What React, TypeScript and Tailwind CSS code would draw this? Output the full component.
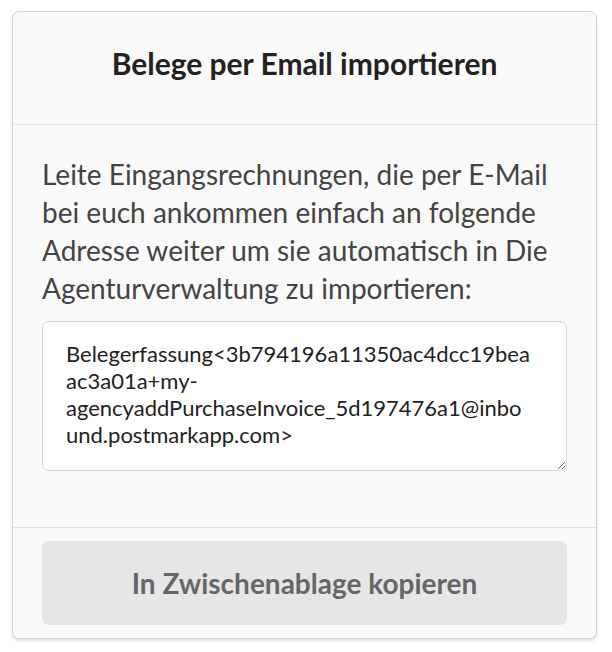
import React from "react";

export default function App() {
  const addr =
    "Belegerfassung<3b794196a11350ac4dcc19bea\nac3a01a+my-\nagencyaddPurchaseInvoice_5d197476a1@inbo\nund.postmarkapp.com>";
  return (
    <div className="min-h-[652px] w-[612px] bg-white pt-[11px] pl-[12px]" style={{ fontFamily: "Lato, 'Open Sans', sans-serif" }}>
      <div className="w-[585px] rounded-[7px] border border-[#d6d6d6] bg-[#fafafa] shadow-[0_2px_3px_rgba(0,0,0,0.12)]">
        <div className="h-[113px] border-b border-[#e0e0e0] pt-[33px] text-center">
          <h1 className="text-[30px] font-bold leading-[36px] text-[#222]">Belege per Email importieren</h1>
        </div>
        <div className="px-[29px] pt-[30px] pb-[56px]">
          <p className="text-[28px] leading-[38px] text-[#444]">
            Leite Eingangsrechnungen, die per E-Mail bei euch ankommen einfach an folgende Adresse weiter um sie automatisch in Die Agenturverwaltung zu importieren:
          </p>
          <textarea
            readOnly
            value={addr}
            className="mt-[14px] block h-[150px] w-full resize-y whitespace-pre rounded-[7px] border border-[#d6d6d6] bg-white px-[23px] pt-[18px] text-[22px] leading-[27px] text-[#222] outline-none"
            style={{ fontFamily: "Lato, 'Open Sans', sans-serif" }}
          />
        </div>
        <div className="border-t border-[#e0e0e0] px-[29px] pt-[13px] pb-[13px]">
          <button className="flex h-[84px] w-full items-center justify-center rounded-[7px] bg-[#e6e6e6] text-[28px] font-bold text-[#666]">
            In Zwischenablage kopieren
          </button>
        </div>
      </div>
    </div>
  );
}
